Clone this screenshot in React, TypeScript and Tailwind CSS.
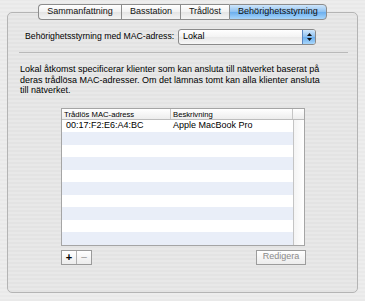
import React from "react";

const tabs = ["Sammanfattning", "Basstation", "Trådlöst", "Behörighetsstyrning"];

export default function App() {
    const rows = Array.from({ length: 10 });

    return (
        <div className="w-[365px] h-[301px] pt-[4px] bg-[repeating-linear-gradient(0deg,#e9e9e9_0px,#e9e9e9_2px,#ededed_2px,#ededed_4px)] font-['Liberation_Sans',Arial,sans-serif] text-[9px] text-black overflow-hidden">
            {/* tab strip */}
            <div className="relative z-10 flex justify-center h-[16px]">
                {tabs.map((t, i) => {
                    const selected = i === tabs.length - 1;
                    return (
                        <div
                            key={t}
                            className={
                                "flex items-center justify-center h-[16px] border-y border-[#8c8c8c] text-[#111] " +
                                (i === 0 ? "rounded-l-[4px] border-l " : "border-l ") +
                                (selected
                                    ? "rounded-r-[4px] border-r border-[#4d7ab8] bg-[linear-gradient(#cfe6fb,#8cc0f0_50%,#6aaeee_51%,#a8d6fb)] px-[8px]"
                                    : "bg-[linear-gradient(#ffffff,#f1f1f1_50%,#e4e4e4_51%,#f4f4f4)] px-[8px]")
                            }
                        >
                            {t}
                        </div>
                    );
                })}
            </div>

            {/* group box */}
            <div className="mt-[-8px] mx-[7px] h-[281px] border border-[#b4b4b4] rounded-[5px] bg-[repeating-linear-gradient(0deg,#e3e3e3_0px,#e3e3e3_2px,#e8e8e8_2px,#e8e8e8_4px)] pt-[16px]">
                <div className="flex items-center h-[16px] pl-[17px]">
                    <span className="w-[153px] text-[8.7px]">Behörighetsstyrning med MAC-adress:</span>
                    <div className="flex items-center w-[138px] h-[16px] border border-[#8a8a8a] rounded-[3px] bg-[linear-gradient(#ffffff,#f3f3f3_50%,#e8e8e8_51%,#f7f7f7)] overflow-hidden">
                        <span className="flex-1 pl-[4px] text-[9px]">Lokal</span>
                        <div className="flex flex-col items-center justify-center w-[13px] h-full border-l border-[#5a86c0] bg-[linear-gradient(#cfe6fb,#8cc0f0_50%,#6aaeee_51%,#a8d6fb)] gap-[2px]">
                            <svg width="5" height="3" viewBox="0 0 5 3"><path d="M0 3 L2.5 0 L5 3Z" fill="#111" /></svg>
                            <svg width="5" height="3" viewBox="0 0 5 3"><path d="M0 0 L2.5 3 L5 0Z" fill="#111" /></svg>
                        </div>
                    </div>
                </div>

                <div className="mt-[7px] ml-[11px] mr-[9px] h-px bg-[#b9b9b9]" />

                <p className="mt-[11px] ml-[12px] leading-[10.5px] whitespace-nowrap">
                    Lokal åtkomst specificerar klienter som kan ansluta till nätverket baserat på
                    <br />
                    deras trådlösa MAC-adresser. Om det lämnas tomt kan alla klienter ansluta
                    <br />
                    till nätverket.
                </p>

                {/* table */}
                <div className="mt-[12px] ml-[53px] w-[244px] border border-[#a5a5a5] bg-white">
                    <div className="flex h-[11px] border-b border-[#bdbdbd] bg-[linear-gradient(#ffffff,#ededed)] text-[7.7px] leading-[11px]">
                        <div className="w-[109px] pl-[2px] border-r border-[#c6c6c6]">Trådlös MAC-adress</div>
                        <div className="flex-1 pl-[2px] border-r border-[#c6c6c6]">Beskrivning</div>
                        <div className="w-[11px]" />
                    </div>
                    <div className="flex">
                        <div className="flex-1">
                            {rows.map((_, i) => (
                                <div key={i} className={"flex h-[12.5px] items-center " + (i % 2 === 1 ? "bg-[#e9eef8]" : "bg-white")}>
                                    {i === 0 && (
                                        <>
                                            <span className="w-[109px] pl-[4px]">00:17:F2:E6:A4:BC</span>
                                            <span className="pl-[2px]">Apple MacBook Pro</span>
                                        </>
                                    )}
                                </div>
                            ))}
                        </div>
                        <div className="w-[11px] border-l border-[#c4c4c4] bg-[linear-gradient(90deg,#f4f4f4,#ffffff)]" />
                    </div>
                </div>

                {/* buttons */}
                <div className="mt-[4px] ml-[53px] w-[245px] flex items-center justify-between">
                    <div className="flex h-[15px] border border-[#9a9a9a] bg-[linear-gradient(#ffffff,#ececec)]">
                        <div className="w-[15px] flex items-center justify-center border-r border-[#b0b0b0] text-[11px] font-bold leading-none">+</div>
                        <div className="w-[14px] flex items-center justify-center text-[10px] text-[#9a9a9a] leading-none">–</div>
                    </div>
                    <div className="w-[50px] h-[15px] flex items-center justify-center border border-[#9c9c9c] bg-[linear-gradient(#ffffff,#ececec)] text-[#8a8a8a]">
                        Redigera
                    </div>
                </div>
            </div>
        </div>
    );
}
